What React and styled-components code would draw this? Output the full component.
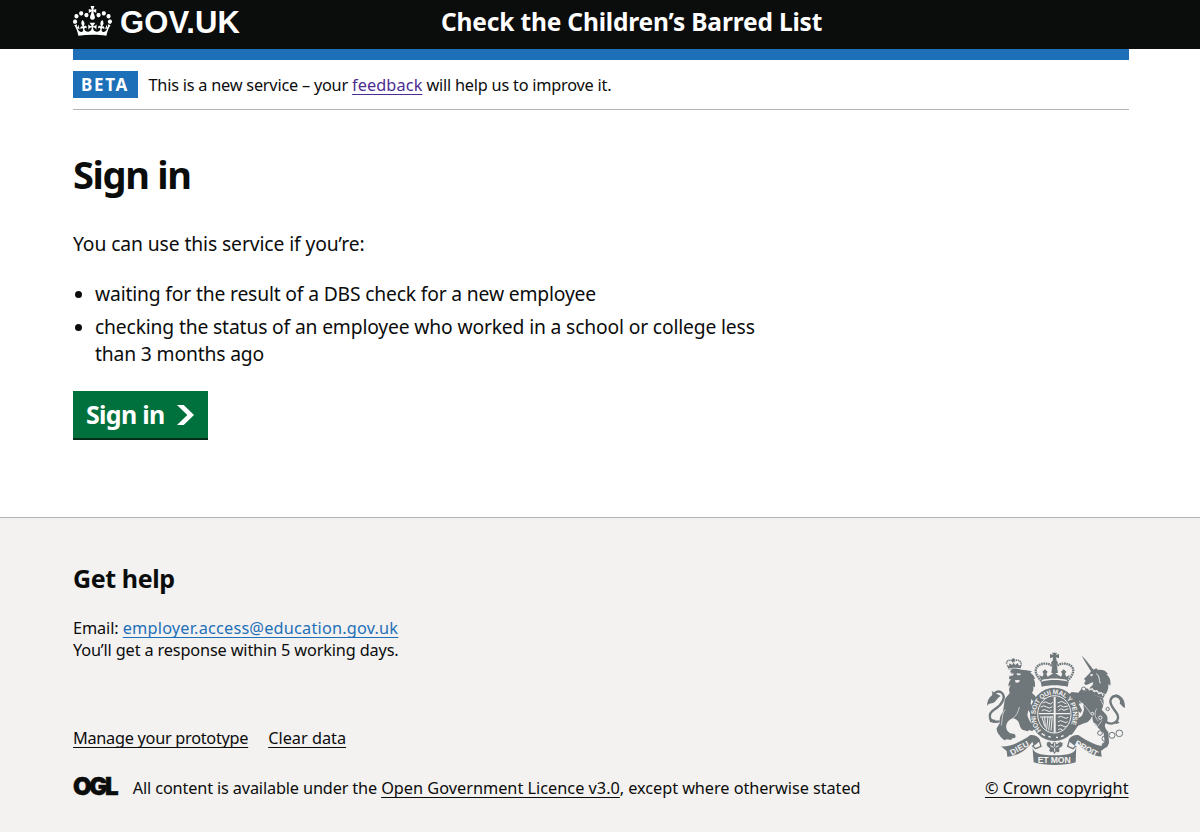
import React from 'react';
import styled, { createGlobalStyle } from 'styled-components';

const GlobalStyle = createGlobalStyle`
  * { box-sizing: border-box; }
  body {
    margin: 0;
    background: #fff;
    color: #0b0c0c;
    font-family: "Noto Sans", "Liberation Sans", sans-serif;
  }
`;

const Page = styled.div`
  min-height: 832px;
  display: flex;
  flex-direction: column;
`;

const Container = styled.div`
  width: 1056px;
  margin-left: 73px;
`;

const Header = styled.header`
  height: 49px;
  background: #0b0c0c;
  color: #fff;
`;

const HeaderRow = styled(Container)`
  display: flex;
  height: 44px;
  align-items: center;
`;

const LogoLink = styled.a`
  display: flex;
  align-items: center;
  width: 368px;
  gap: 8px;
  color: #fff;
  text-decoration: none;
`;

const CrownDrawing = styled.svg`
  width: 39px;
  height: 30px;
  margin-bottom: 2px;
`;

const Wordmark = styled.span`
  padding-top: 1px;
  font: 700 31px/44px "Liberation Sans", Arial, sans-serif;
  letter-spacing: 0.1px;
`;

const ServiceName = styled.span`
  font-size: 24.5px;
  font-weight: 700;
  line-height: 44px;
  letter-spacing: -0.17px;
`;

const BlueBar = styled.div`
  height: 11px;
  background: #1d70b8;
`;

const PhaseBanner = styled.div`
  display: flex;
  align-items: center;
  height: 50px;
  padding-bottom: 1px;
  border-bottom: 1px solid #b1b4b6;
`;

const Tag = styled.strong`
  width: 65px;
  height: 27px;
  margin-right: 10.5px;
  padding-left: 8px;
  background: #1d70b8;
  color: #fff;
  font-size: 17px;
  line-height: 28px;
  letter-spacing: 1.7px;
`;

const Text = styled.span`
  letter-spacing: ${p => p.$track || 0}px;
  white-space: pre;
`;

const Small = styled.p`
  margin: 0;
  font-size: 16.3px;
  line-height: 22px;
`;

const PhaseText = styled(Small)`
  padding-top: 2px;
`;

const Link = styled.a`
  color: ${p => p.$color || '#0b0c0c'};
  letter-spacing: ${p => p.$track || 0}px;
  text-decoration: underline;
  text-decoration-thickness: 1px;
  text-decoration-skip-ink: none;
  text-underline-offset: 3px;
  white-space: pre;
`;

const Main = styled.main`
  height: 407px;
  padding-top: 37px;
`;

const Title = styled.h1`
  margin: 0 0 28px;
  font-size: 38px;
  line-height: 55px;
  letter-spacing: -1.35px;
`;

const Body = styled.p`
  margin: 0 0 22px;
  font-size: 19.3px;
  line-height: 27.5px;
`;

const List = styled.ul`
  margin: 0 0 23px;
  padding-left: 22px;
  list-style: none;
`;

const Item = styled.li`
  display: flex;
  margin-bottom: 5.5px;
  font-size: 19.3px;
  line-height: 27.5px;

  &::before {
    content: "";
    flex: none;
    width: 7px;
    height: 7px;
    margin: 11px 13px 0 -20px;
    border-radius: 50%;
    background: #0b0c0c;
  }
`;

const Button = styled.button`
  display: flex;
  align-items: center;
  gap: 12px;
  width: 135px;
  height: 47px;
  padding: 0 0 0 13px;
  border: 0;
  background: #00703c;
  box-shadow: 0 2px 0 #002d18;
  color: #fff;
  font: 700 25px/47px "Noto Sans", sans-serif;
  letter-spacing: -0.7px;
`;

const Arrow = styled.svg`
  width: 17px;
  height: 20px;
  margin-top: 2px;
`;

const Footer = styled.footer`
  flex: 1;
  border-top: 1px solid #b1b4b6;
  background: #f3f2f1;
`;

const FooterRow = styled(Container)`
  display: flex;
  justify-content: space-between;
  align-items: flex-end;
  height: 281px;
`;

const FooterTitle = styled.h2`
  margin: 0 0 22px;
  font-size: 25px;
  line-height: 33px;
  letter-spacing: -0.4px;
`;

const FooterLinks = styled.div`
  display: flex;
  gap: 20px;
  margin: 66px 0 28px;
  font-size: 16.3px;
  line-height: 22px;
`;

const Licence = styled.div`
  display: flex;
  align-items: center;
  height: 22px;
`;

const LicenceLogo = styled.span`
  width: 59.8px;
  margin-top: -3px;
  font: 900 24px/22px Inter, sans-serif;
  letter-spacing: -2.3px;
  -webkit-text-stroke: 0.5px #0b0c0c;
`;

const Copyright = styled.div`
  display: flex;
  flex-direction: column;
  align-items: center;
  width: 144.5px;
`;

const ArmsDrawing = styled.svg`
  flex: none;
  width: 150px;
  height: 125px;
  margin: 0 0 7px -5px;
`;

const Crown = () => (
  <CrownDrawing viewBox="0 0 132 97" preserveAspectRatio="none" fill="#fff">
    <path fillRule="evenodd" d="M25 30.2c3.5 1.5 7.7-.2 9.1-3.7 1.5-3.6-.2-7.8-3.9-9.2-3.6-1.4-7.6.3-9.1 3.9-1.4 3.5.3 7.5 3.9 9zM9 39.5c3.6 1.5 7.8-.2 9.2-3.7 1.5-3.6-.2-7.8-3.9-9.1-3.6-1.5-7.6.2-9.1 3.8-1.4 3.5.3 7.5 3.8 9zM4.4 57.2c3.5 1.5 7.7-.2 9.1-3.8 1.5-3.6-.2-7.7-3.9-9.1-3.5-1.5-7.6.3-9.1 3.8-1.4 3.5.3 7.6 3.9 9.1zm38.3-21.4c3.5 1.5 7.7-.2 9.1-3.8 1.5-3.6-.2-7.7-3.9-9.1-3.6-1.5-7.6.3-9.1 3.8-1.3 3.6.4 7.7 3.9 9.1zm64.4-5.6c-3.6 1.5-7.8-.2-9.1-3.7-1.5-3.6.2-7.8 3.8-9.2 3.6-1.4 7.7.3 9.2 3.9 1.3 3.5-.4 7.5-3.9 9zm15.9 9.3c-3.6 1.5-7.7-.2-9.1-3.7-1.5-3.6.2-7.8 3.7-9.1 3.6-1.5 7.7.2 9.2 3.8 1.5 3.5-.3 7.5-3.8 9zm4.7 17.7c-3.6 1.5-7.8-.2-9.2-3.8-1.5-3.6.2-7.7 3.9-9.1 3.6-1.5 7.7.3 9.2 3.8 1.3 3.5-.4 7.6-3.9 9.1zM89.3 35.8c-3.6 1.5-7.8-.2-9.2-3.8-1.4-3.6.2-7.7 3.9-9.1 3.6-1.5 7.7.3 9.2 3.8 1.4 3.6-.3 7.7-3.9 9.1zM69.7 17.7l8.9 4.7V9.3l-8.9 2.8c-.2-.3-.5-.6-.9-.9L72.4 0H59.6l3.5 11.2c-.3.3-.6.5-.9.9l-8.8-2.8v13.1l8.8-4.7c.3.3.6.7.9.9l-5 15.4v.1c-.2.8-.4 1.6-.4 2.4 0 4.1 3.1 7.5 7 8.1h.2c.3 0 .7.1 1 .1.4 0 .7 0 1-.1h.2c4-.6 7.1-4.1 7.1-8.1 0-.8-.1-1.7-.4-2.4V34l-5.1-15.4c.4-.2.7-.6 1-.9zM66 92.8c16.9 0 32.8 1.1 47.1 3.2 4-16.9 8.9-26.7 14-33.5l-9.6-3.4c1 4.9 1.1 7.2 0 10.2-1.5-1.4-3-4.3-4.2-8.7L108.6 76c2.8-2 5-3.2 7.5-3.3-4.4 9.4-10 11.9-13.6 11.2-4.3-.8-6.3-4.6-5.6-7.9 1-4.7 5.7-5.9 8-.5 4.3-8.7-3-11.4-7.6-8.8 7.1-7.2 7.9-13.5 2.1-21.1-8 6.1-8.1 12.3-4.5 20.8-4.7-5.4-12.1-2.5-9.5 6.2 3.4-5.2 7.9-2 7.2 3.1-.6 4.3-6.4 7.8-13.5 7.2-10.3-.9-10.9-8-11.2-13.8 2.5-.5 7.1 1.8 11 7.3L80.2 60c-4.1 4.4-8 5.3-12.3 5.4 1.4-4.4 8-11.6 8-11.6H55.5s6.4 7.2 7.9 11.6c-4.2-.1-8-1-12.3-5.4l1.4 16.4c3.9-5.5 8.5-7.7 10.9-7.3-.3 5.8-.9 12.8-11.1 13.8-7.2.6-12.9-2.9-13.5-7.2-.7-5 3.8-8.3 7.1-3.1 2.7-8.7-4.6-11.6-9.4-6.2 3.7-8.5 3.6-14.7-4.6-20.8-5.8 7.6-5 13.9 2.2 21.1-4.7-2.6-11.9.1-7.7 8.8 2.3-5.5 7.1-4.2 8.1.5.7 3.3-1.3 7.1-5.7 7.9-3.5.7-9-1.8-13.5-11.2 2.5.1 4.7 1.3 7.5 3.3l-4.7-15.4c-1.2 4.4-2.7 7.2-4.3 8.7-1.1-3-.9-5.3 0-10.2l-9.5 3.4c5 6.9 9.9 16.7 14 33.5 14.8-2.1 30.8-3.2 47.7-3.2z" />
  </CrownDrawing>
);

const INK = '#6f777b';
const PAPER = '#f3f2f1';

const RoyalArms = () => (
  <ArmsDrawing viewBox="0 0 450 375" fill={INK} fontFamily="Liberation Sans" fontWeight="700">
    {/* lion */}
    <path d="M82 58l6 13c10-3 24-4 37-1l4-13-9 5-4-8-7 6-5-7-5 7-7-5-3 8z" />
    <circle cx="103" cy="45" r="5" />
    <path d="M83 56c-2-12 14-13 19-6 7-8 24-5 24 6" fill="none" stroke={INK} strokeWidth="5" strokeDasharray="4 2" />
    <path d="M86 75c12-6 28-5 41-1 12 0 20 3 32 4l-5 5c8 6 13 12 15 19l-5-1c5 10 4 17 4 26l-5-3c1 8 0 13-4 20 6 5 10 8 14 17l-6 14-10-13-2 14 12 17-2 20c-8-2-13-10-17-18l-3 16c3 8 7 22 16 26l10 3c5 3 5 11 1 15l-9-1-3 5-9-4-5 4-16-5c-5-3-8-12-10-20-3-8-10-13-20-14-9 5-16 11-18 20-2 10 2 19 12 25l12 2c4 3 5 8 2 12l-8 1-4 5-12-2-8 3c-6-5-12-10-15-16-6-6-8-12-8-20l10-17c-3-10 1-22 9-33l5-35c3-9 11-13 15-21-3-9-2-17 3-24l-7 4c0-9 3-15 8-22l-6 1c0-9 3-15 9-20l-6-1c2-6 4-8 7-10z" />
    <path d="M91 88l13-3-1 6-9 2zm22-3l13 1-3 5-9-1zm-5 20l15 1-3 6-10 1z" fill={PAPER} />
    <path d="M62 229C28 236 24 207 47 193c21-12 35-36 22-49-9-9-24-4-28 12" fill="none" stroke={INK} strokeWidth="7" />
    <path d="M24 183c1-18 7-27 17-33l-3-13c8 8 19 10 27 16-8 4-12 12-17 17-8 7-19 3-24 13zM30 219c8 1 11 6 19 5l-2 10-14-3z" />
    <path d="M79 194c-12 13-8 30-12 47m34-20c11-9 17-20 20-35" fill="none" stroke={PAPER} strokeWidth="2" />

    {/* unicorn */}
    <path d="M307 31l13 13 24 31-7 6-20-33z" />
    <path d="M337 77l15-7 5 5c14-2 24 3 30 12l-5 1c10 8 14 18 12 34l-6-5c1 12-2 22-8 31l-49-18c7-7 12-10 12-18-8 1-13 7-23 8l-5-5 5-7-5-7 5-4c6-8 12-10 17-20z" />
    <path d="M334 90l6-2-1 5zm18-4c11 7 7 18 12 29" fill="none" stroke={PAPER} strokeWidth="3" />
    <path d="M323 130l55 19-5 10-56-17z" />
    <path d="M326 126l5 10 9-6 5 11 9-5 5 11 9-4 4 10" fill="none" stroke={PAPER} strokeWidth="3" />
    <path d="M317 139l55 21c4 13 2 24-4 34l12 13c11 13 4 24-2 31-2 9 3 16 10 23l2 33-6 13-17-1 2-10 8-5-3-26-26-26c-7-8-8-17-8-26-6 11-11 19-23 21l-20 8-13 20-6 7-17-1 5-11 9-5 9-23 25-17 6-18-3-20-13 2 10 20-4 8-19-13-3-12-13-14-6 1-11-7-3 7-5-6 7-12 17 2 9-9 20 2 9-11z" />
    <path d="M376 226c20 20 47 5 40-16-7-16-27-29-21-46 6-15 23-14 31-1" fill="none" stroke={INK} strokeWidth="7" />
    <path d="M410 147c15 5 29 14 28 41-9-2-9-9-16-12 3-8 0-16-12-24zM411 224l11 9-12 5z" />
    <path d="M300 168c18 13 26 24 35 38m18-15c-8 15-6 25 5 37m11-2l-23 32m18-96l17 35" fill="none" stroke={PAPER} strokeWidth="2" />
    <g fill="none" stroke={INK} strokeWidth="3">
      <circle cx="363" cy="264" r="7" /><circle cx="377" cy="281" r="8" />
      <circle cx="399" cy="271" r="9" /><circle cx="421" cy="265" r="10" />
      <circle cx="314" cy="132" r="6" /><circle cx="386" cy="192" r="5" />
    </g>
    <g fill="none" stroke={PAPER} strokeWidth="3">
      <circle cx="346" cy="242" r="6" /><circle cx="364" cy="218" r="5" /><circle cx="340" cy="206" r="4" />
    </g>

    {/* crown */}
    <path d="M219 23h15l-3 7 9-3v13l-9-3 2 10c5 3 5 9 0 12l4 25h-20l3-25c-5-3-5-9 1-12l1-10-9 3V27l9 3z" />
    <path d="M187 108c-12-12-22-28-14-41 10-14 35-15 47-3m45 44c12-12 23-28 15-41-10-14-35-15-47-3" fill="none" stroke={INK} strokeWidth="7" strokeDasharray="5 2" />
    <path d="M187 105l-7-15 10 5 4-8-4-7 8-7 8 7-4 7 4 8 10-6 10-7 10 7 10 6 4-8-4-7 8-7 8 7-4 7 4 8 10-5-7 15c-24-6-55-6-78 0z" />
    <path d="M185 110c25-7 58-7 84 0l-3 15c-24-6-54-6-78 0z" />

    {/* garter and shield */}
    <ellipse cx="226" cy="208" rx="73" ry="80" />
    <ellipse cx="226" cy="208" rx="50" ry="56" fill={INK} stroke={PAPER} strokeWidth="3" />
    <path d="M224 155h6v108h-6zM179 204h94v4h-94z" fill={PAPER} />
    <g fill="none" stroke={PAPER} strokeWidth="3">
      <path d="M191 174q8-7 16 0t14-2m-36 14q10-7 18 0t17-1m-32 12q8-6 16 0t14-1" />
      <path d="M236 174l12-5 14 8m-26 9l9-5 8 5 14-3m-29 14l8-6 9 5 13-5" />
      <path d="M189 217l8 26m0-29l2 34m8-34l-4 40m11-40l-5 42m11-43l-4 44M183 216h36" />
      <path d="M237 217q8-6 16 0t15 0m-31 13q8-6 16 0t13 0m-29 13q8-6 15 0t10 0m-24 11q5-5 12 0" />
    </g>
    <path id="garter-line" d="M187 256A56 63 0 1 1 265 256" fill="none" />
    <text fontSize="20" fill={PAPER} textLength="264" lengthAdjust="spacing">
      <textPath href="#garter-line">HONI SOIT QUI MAL Y PENSE</textPath>
    </text>
    <path d="M188 266l10 6m10 3l7 1m16 1h6m9-2l8-3" fill={PAPER} stroke={PAPER} strokeWidth="4" />

    {/* motto ribbon */}
    <path d="M66 304c26 2 62-14 88-34 13-1 24 5 29 14l-18 19-5-13c-20 29-48 43-75 45l-2-17z" />
    <path d="M385 304c-26 2-59-14-87-34-13-1-24 5-29 14l20 19 5-13c20 29 48 43 74 45l-2-17z" />
    <path d="M160 301c0 24 20 30 66 30s66-6 66-30l-2 51c-35 11-91 11-126 0z" />
    <path d="M161 303l20-16 5 17-16 7zM291 303l-20-16-5 17 16 7z" fill={PAPER} stroke={INK} strokeWidth="4" />
    <text fontSize="25" fill={PAPER} transform="translate(99 332) rotate(-30)" textLength="61">DIEU</text>
    <text fontSize="25" fill={PAPER} transform="translate(286 300) rotate(29)" textLength="74">DROIT</text>
    <text fontSize="26" fill={PAPER} x="176" y="355" textLength="99">ET MON</text>
    <path d="M202 294c7-8 14-4 17 3 0-9 15-9 15 0 3-7 12-10 18-2 2 9-6 14-11 15 6 10-3 16-9 11l-5 8-6-8c-7 4-15-2-9-11-6-2-12-8-10-16z" stroke={PAPER} strokeWidth="3" />
    <path d="M214 302l10 5m15-5l-9 5m-3-13v11m0 5v10" fill="none" stroke={PAPER} strokeWidth="3" />
  </ArmsDrawing>
);

export default function App() {
  return (
    <Page>
      <GlobalStyle />
      <Header>
        <HeaderRow>
          <LogoLink><Crown /><Wordmark>GOV.UK</Wordmark></LogoLink>
          <ServiceName>Check the Children’s Barred List</ServiceName>
        </HeaderRow>
      </Header>
      <Container>
        <BlueBar />
        <PhaseBanner>
          <Tag>BETA</Tag>
          <PhaseText>
            <Text $track={-0.22}>{'This is a new service – your '}</Text>
            <Link $color="#4c2c92" $track={0.1}>feedback</Link>
            <Text $track={-0.22}>{' will help us to improve it.'}</Text>
          </PhaseText>
        </PhaseBanner>
        <Main>
          <Title>Sign in</Title>
          <Body><Text $track={-0.1}>You can use this service if you’re:</Text></Body>
          <List>
            <Item><Text $track={-0.17}>waiting for the result of a DBS check for a new employee</Text></Item>
            <Item>
              <Text $track={-0.16}>{'checking the status of an employee who worked in a school or college less\nthan 3 months ago'}</Text>
            </Item>
          </List>
          <Button>
            Sign in
            <Arrow viewBox="0 0 33 40" preserveAspectRatio="none" fill="#fff">
              <path d="M0 0h13l20 20-20 20H0l20-20z" />
            </Arrow>
          </Button>
        </Main>
      </Container>
      <Footer>
        <FooterRow>
          <div>
            <FooterTitle>Get help</FooterTitle>
            <Small>
              <Text $track={-0.1}>{'Email: '}</Text>
              <Link $color="#1d70b8" $track={0.2}>employer.access@education.gov.uk</Link>
            </Small>
            <Small><Text $track={-0.15}>You’ll get a response within 5 working days.</Text></Small>
            <FooterLinks>
              <Link $track={-0.28}>Manage your prototype</Link>
              <Link>Clear data</Link>
            </FooterLinks>
            <Licence>
              <LicenceLogo>OGL</LicenceLogo>
              <Small>
                <Text $track={-0.15}>{'All content is available under the '}</Text>
                <Link>Open Government Licence v3.0</Link>
                <Text $track={-0.06}>, except where otherwise stated</Text>
              </Small>
            </Licence>
          </div>
          <Copyright>
            <RoyalArms />
            <Small><Link>© Crown copyright</Link></Small>
          </Copyright>
        </FooterRow>
      </Footer>
    </Page>
  );
}
